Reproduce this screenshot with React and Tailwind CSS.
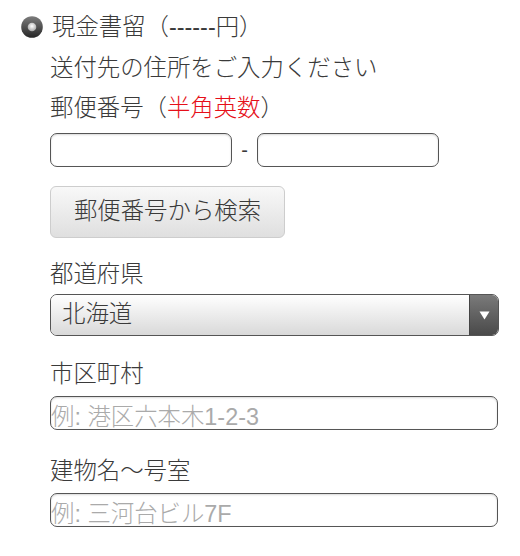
import React from "react";

function Radio() {
  return (
    <svg width="22" height="22" viewBox="0 0 22 22" className="shrink-0">
      <defs>
        <linearGradient id="ro" x1="0" y1="0" x2="0" y2="1">
          <stop offset="0" stopColor="#7d7d7d" />
          <stop offset="1" stopColor="#262626" />
        </linearGradient>
        <radialGradient id="ri" cx="0.5" cy="0.4" r="0.6">
          <stop offset="0" stopColor="#ffffff" />
          <stop offset="1" stopColor="#a5a5a5" />
        </radialGradient>
      </defs>
      <circle cx="11" cy="11" r="10.8" fill="url(#ro)" />
      <circle cx="11" cy="11" r="4.3" fill="url(#ri)" />
    </svg>
  );
}

export default function App() {
  const font = "font-['Liberation_Sans','Noto_Sans_CJK_JP',sans-serif]";
  const inputCls =
    "block h-[34px] rounded-[7px] border-[1.5px] border-[#555] bg-white shadow-[inset_0_1px_2px_rgba(0,0,0,0.15)]";
  return (
    <div className={`w-[520px] h-[556px] bg-white text-[#3a3a3a] text-[23.4px] font-light overflow-hidden ${font}`}>
      <div className="flex items-center h-[42px] mt-[6px] pl-[21px] gap-[9px] leading-[42px]">
        <Radio />
        <span>現金書留（------円）</span>
      </div>
      <div className="pl-[50px] pr-[21px]">
        <div className="h-[41px] leading-[41px]">送付先の住所をご入力ください</div>
        <div className="h-[39px] leading-[39px]">
          郵便番号<span>（</span>
          <span className="text-[#e60f19]">半角英数</span>
          <span>）</span>
        </div>
        <div className="flex items-center mt-[5px]">
          <div className={`${inputCls} w-[182px]`} />
          <span className="w-[25px] text-center text-[20px]">-</span>
          <div className={`${inputCls} w-[182px]`} />
        </div>
        <button className="mt-[19px] flex items-center justify-center w-[235px] h-[52px] rounded-[6px] border border-[#cdcdcd] bg-gradient-to-b from-[#f8f8f8] to-[#dfdfdf] text-[#3a3a3a] text-[23.4px] leading-none">
          郵便番号から検索
        </button>
        <div className="mt-[16px] h-[40px] leading-[40px]">都道府県</div>
        <div className="flex h-[42px] w-[449px] rounded-[7px] border-[1.5px] border-[#555] overflow-hidden">
          <div className="flex-1 flex items-center pl-[11px] bg-gradient-to-b from-[#ffffff] to-[#d9d9d9] leading-none">
            北海道
          </div>
          <div className="w-[29px] flex items-center justify-center bg-gradient-to-b from-[#7a7a7a] to-[#4a4a4a] border-l border-[#444]">
            <svg width="11" height="9" viewBox="0 0 11 9">
              <path d="M0.5 0.5 H10.5 L5.5 8.5 Z" fill="#fff" />
            </svg>
          </div>
        </div>
        <div className="mt-[18px] h-[40px] leading-[40px]">市区町村</div>
        <div className={`${inputCls} mt-[2px] w-[448px] flex items-center pt-[10px] leading-none text-[#aaa] overflow-hidden`}>
          例: 港区六本木1-2-3
        </div>
        <div className="mt-[21px] h-[40px] leading-[40px]">建物名〜号室</div>
        <div className={`${inputCls} mt-[2px] w-[448px] flex items-center pt-[10px] leading-none text-[#aaa] overflow-hidden`}>
          例: 三河台ビル7F
        </div>
      </div>
    </div>
  );
}
